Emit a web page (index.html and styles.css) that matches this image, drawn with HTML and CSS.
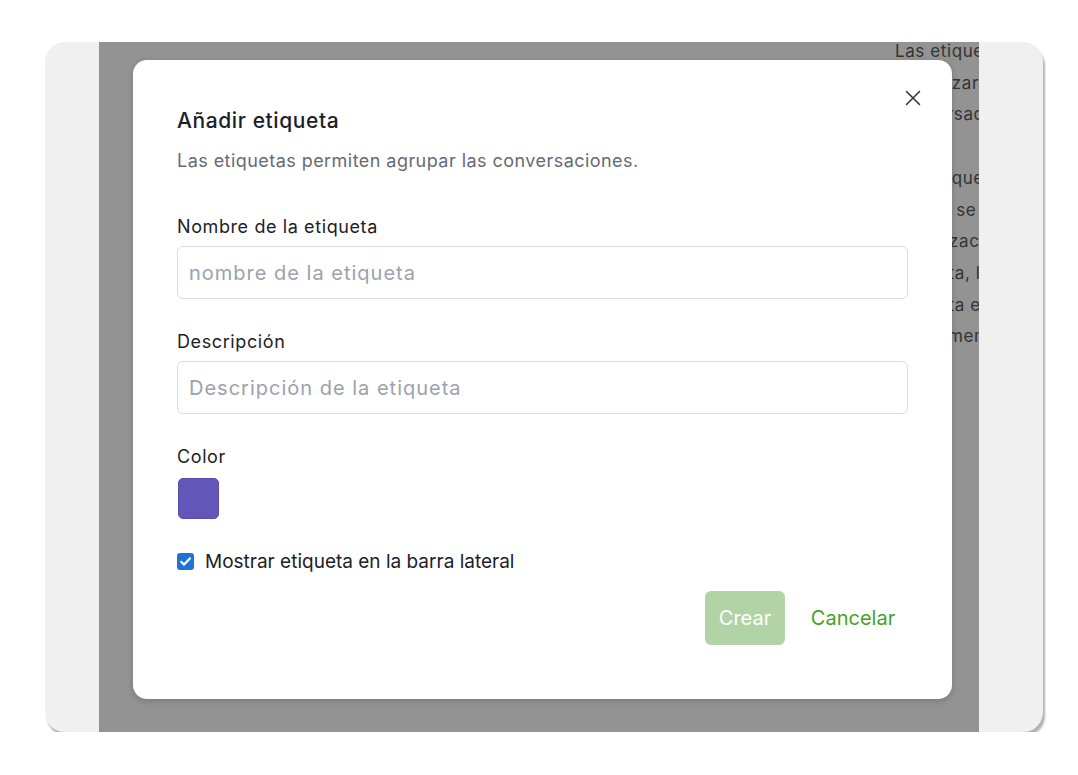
FILE: index.html
```html
<!DOCTYPE html>
<html lang="es">
<head>
<meta charset="utf-8">
<title>Añadir etiqueta</title>
<link rel="stylesheet" href="styles.css">
</head>
<body>
<div class="frame">
  <div class="strip strip-left"></div>
  <div class="viewport">
    <div class="page">
      <div class="page-text">
        <p>Las etiquetas</p>
        <p>Organizar las</p>
        <p>conversaciones</p>
        <p>&nbsp;</p>
        <p>Las etiquetas</p>
        <p>cuales se pueden</p>
        <p>organización</p>
        <p>etiqueta, la</p>
        <p>etiqueta en la</p>
        <p>previamente</p>
      </div>
    </div>
    <div class="overlay">
      <div class="modal">
        <button class="close" type="button" aria-label="Cerrar">
          <svg width="16" height="16" viewBox="0 0 16 16"><path d="M1.5 1.5 L14.5 14.5 M14.5 1.5 L1.5 14.5" stroke="#2f3237" stroke-width="1.5" stroke-linecap="round" fill="none"/></svg>
        </button>
        <h2 class="title">Añadir etiqueta</h2>
        <p class="desc">Las etiquetas permiten agrupar las conversaciones.</p>
        <label class="label label-first">Nombre de la etiqueta</label>
        <div class="input"><span class="placeholder">nombre de la etiqueta</span></div>
        <label class="label">Descripción</label>
        <div class="input"><span class="placeholder">Descripción de la etiqueta</span></div>
        <label class="label">Color</label>
        <div class="swatch"></div>
        <div class="check-row">
          <span class="checkbox">
            <svg width="13" height="13" viewBox="0 0 13 13"><path d="M2.2 6.8 L5.1 9.6 L10.9 3.4" stroke="#fff" stroke-width="2.2" fill="none" stroke-linecap="round" stroke-linejoin="round"/></svg>
          </span>
          <span class="check-label">Mostrar etiqueta en la barra lateral</span>
        </div>
        <div class="actions">
          <button class="btn btn-primary" type="button">Crear</button>
          <button class="btn btn-link" type="button">Cancelar</button>
        </div>
      </div>
    </div>
  </div>
  <div class="strip strip-right"></div>
</div>
</body>
</html>
```

FILE: styles.css
```css
* { box-sizing: border-box; }

html, body {
  margin: 0;
  padding: 0;
  background: #ffffff;
}

body {
  font-family: "Inter", "Liberation Sans", sans-serif;
  padding: 42px 0 0 45px;
}

.frame {
  width: 998px;
  height: 690px;
  background: #f0f0f0;
  border-radius: 20px;
  display: flex;
  box-shadow: 2px 4px 2px #b3b3b3;
}

.strip-left { width: 54px; flex: none; border-radius: 20px 0 0 20px; }
.strip-right { width: 64px; flex: none; border-radius: 0 20px 20px 0; }

.viewport {
  position: relative;
  width: 880px;
  flex: none;
  overflow: hidden;
  background: #ffffff;
}

.page {
  height: 100%;
  padding-left: 796px;
}

.page-text {
  margin-top: -6px;
  width: 300px;
  color: #5a5a5a;
  font-size: 17px;
  letter-spacing: 0.6px;
  line-height: 31.7px;
  white-space: nowrap;
}

.page-text p { margin: 0; }

.overlay {
  position: absolute;
  inset: 0;
  background: rgba(0, 0, 0, 0.424);
  padding: 18px 27px 33px 34px;
}

.modal {
  position: relative;
  width: 819px;
  height: 639px;
  background: #ffffff;
  border-radius: 14px;
  box-shadow: 0 2px 6px rgba(0, 0, 0, 0.18);
  padding: 47px 44px 0 44px;
  display: flex;
  flex-direction: column;
}

.close {
  position: absolute;
  top: 30px;
  right: 31px;
  width: 16px;
  height: 16px;
  padding: 0;
  border: 0;
  background: none;
  display: flex;
}

.title {
  margin: 0;
  font-size: 21px;
  line-height: 28px;
  font-weight: 500;
  color: #1d2127;
  letter-spacing: 0.6px;
}

.desc {
  margin: 13px 0 0 0;
  font-size: 18px;
  letter-spacing: 0.45px;
  line-height: 26px;
  color: #666b73;
}

.label {
  display: block;
  margin-top: 30px;
  font-size: 18px;
  letter-spacing: 0.6px;
  line-height: 26px;
  color: #1d2127;
}

.label-first { margin-top: 40px; }

.input {
  margin-top: 6px;
  height: 53px;
  border: 1px solid #d9dce1;
  border-radius: 6px;
  display: flex;
  align-items: center;
  padding: 0 11px;
}

.placeholder {
  font-size: 20px;
  letter-spacing: 1px;
  color: #9ca2ad;
}

.swatch {
  margin-top: 8px;
  margin-left: 1px;
  width: 41px;
  height: 41px;
  border-radius: 5px;
  background: #6356b9;
  border: 1px solid #5a4db0;
}

.check-row {
  margin-top: 29px;
  display: flex;
  align-items: center;
  gap: 11px;
  height: 26px;
}

.checkbox {
  width: 17px;
  height: 17px;
  border-radius: 3px;
  background: #1f72d6;
  display: flex;
  align-items: center;
  justify-content: center;
}

.check-label {
  font-size: 19px;
  color: #1d2127;
}

.actions {
  margin-top: 17px;
  display: flex;
  justify-content: flex-end;
  gap: 13px;
}

.btn {
  height: 54px;
  border: 0;
  border-radius: 6px;
  font-family: "Inter", "Liberation Sans", sans-serif;
  font-size: 20px;
  cursor: pointer;
}

.btn-primary {
  width: 80px;
  background: #b2d3a5;
  color: #ffffff;
}

.btn-link {
  width: 110px;
  background: transparent;
  color: #45a323;
}
```
